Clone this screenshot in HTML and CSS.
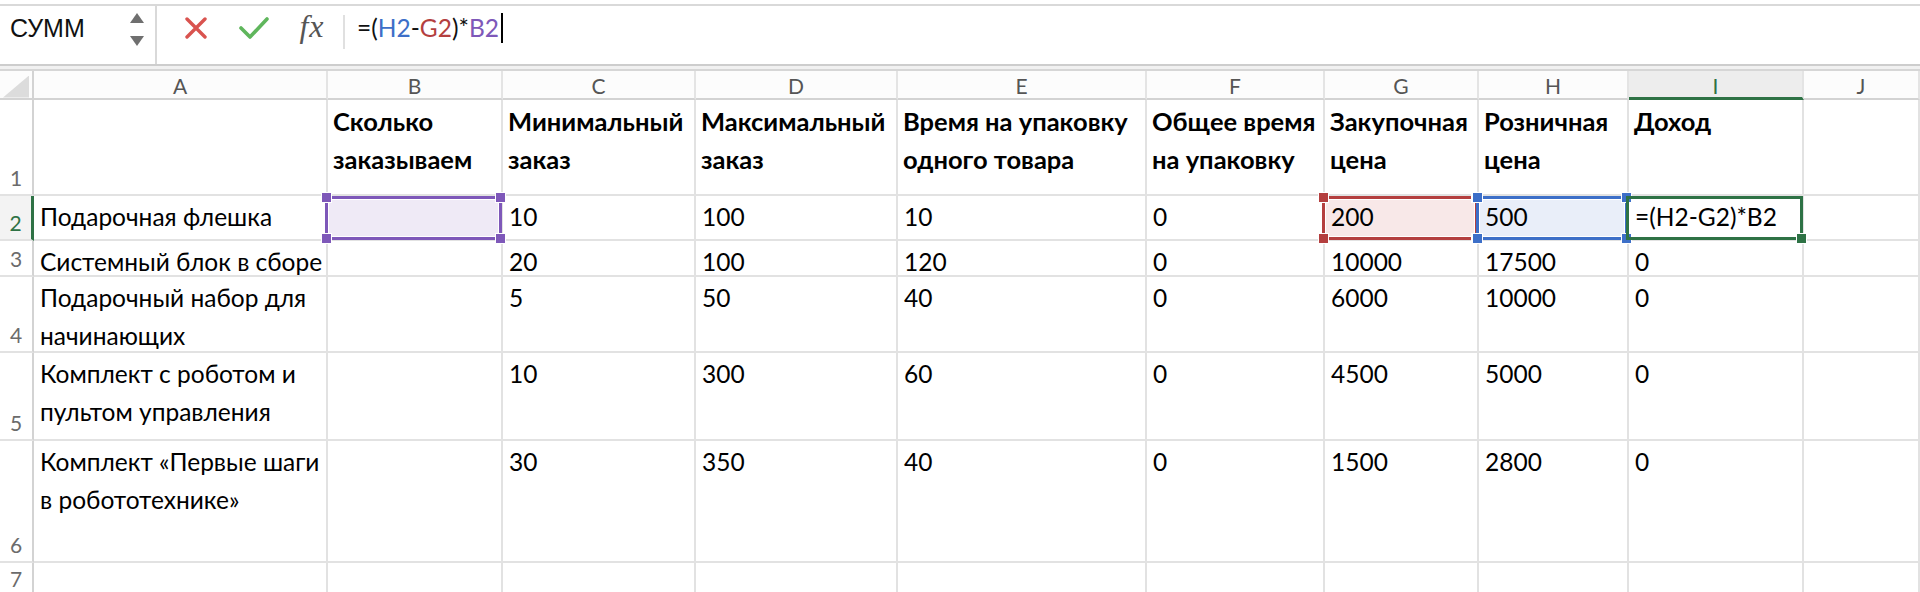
FILE: index.html
```html
<!DOCTYPE html>
<html lang="ru">
<head>
<meta charset="utf-8">
<title>Excel</title>
<link rel="stylesheet" href="styles.css">
</head>
<body>
<div class="fbar">
  <div class="namebox">
    <span class="name">СУММ</span>
    <div class="spin">
      <svg width="14" height="10" viewBox="0 0 14 10"><path d="M7 0 L14 10 L0 10 Z" fill="#6f6f6f"/></svg>
      <svg width="14" height="10" viewBox="0 0 14 10"><path d="M0 0 L14 0 L7 10 Z" fill="#6f6f6f"/></svg>
    </div>
  </div>
  <div class="fbtn first">
    <svg width="22" height="22" viewBox="0 0 22 22"><path d="M2 2 L20 20 M20 2 L2 20" stroke="#d9534f" stroke-width="3.4" stroke-linecap="round"/></svg>
  </div>
  <div class="fbtn">
    <svg width="30" height="24" viewBox="0 0 30 24"><path d="M2 12 L11 21 L28 3" stroke="#5fb65c" stroke-width="3.6" fill="none" stroke-linecap="round" stroke-linejoin="round"/></svg>
  </div>
  <div class="fbtn fx">fx</div>
  <div class="fsep"></div>
  <div class="formula">=(<span class="c-blue">H2</span>-<span class="c-red">G2</span>)*<span class="c-purple">B2</span><span class="caret"></span></div>
</div>
<div class="gap"></div>
<div class="sheet">
  <!-- header row -->
  <div class="ch corner"><div class="tri"></div></div>
  <div class="ch">A</div><div class="ch">B</div><div class="ch">C</div><div class="ch">D</div><div class="ch">E</div>
  <div class="ch">F</div><div class="ch">G</div><div class="ch">H</div><div class="ch act">I</div><div class="ch">J</div>

  <!-- row 1 -->
  <div class="rh">1</div>
  <div class="c"></div>
  <div class="c b">Сколько<br>заказываем</div>
  <div class="c b">Минимальный<br>заказ</div>
  <div class="c b">Максимальный<br>заказ</div>
  <div class="c b">Время на упаковку<br>одного товара</div>
  <div class="c b">Общее время<br>на упаковку</div>
  <div class="c b">Закупочная<br>цена</div>
  <div class="c b">Розничная<br>цена</div>
  <div class="c b">Доход</div>
  <div class="c"></div>

  <!-- row 2 -->
  <div class="rh act">2</div>
  <div class="c">Подарочная флешка</div>
  <div class="c sc"><div class="sel purple"><i class="h tl"></i><i class="h tr"></i><i class="h bl"></i><i class="h br"></i></div></div>
  <div class="c">10</div>
  <div class="c">100</div>
  <div class="c">10</div>
  <div class="c">0</div>
  <div class="c sc"><span class="t">200</span><div class="sel red"><i class="h tl"></i><i class="h tr"></i><i class="h bl"></i><i class="h br"></i></div></div>
  <div class="c sc"><span class="t">500</span><div class="sel blue"><i class="h tl"></i><i class="h tr"></i><i class="h bl"></i><i class="h br"></i></div></div>
  <div class="c sc"><span class="t">=(H2-G2)*B2</span><div class="sel green"><i class="h br"></i></div></div>
  <div class="c"></div>

  <!-- row 3 -->
  <div class="rh">3</div>
  <div class="c">Системный блок в сборе</div>
  <div class="c"></div>
  <div class="c">20</div>
  <div class="c">100</div>
  <div class="c">120</div>
  <div class="c">0</div>
  <div class="c">10000</div>
  <div class="c">17500</div>
  <div class="c">0</div>
  <div class="c"></div>

  <!-- row 4 -->
  <div class="rh">4</div>
  <div class="c">Подарочный набор для<br>начинающих</div>
  <div class="c"></div>
  <div class="c">5</div>
  <div class="c">50</div>
  <div class="c">40</div>
  <div class="c">0</div>
  <div class="c">6000</div>
  <div class="c">10000</div>
  <div class="c">0</div>
  <div class="c"></div>

  <!-- row 5 -->
  <div class="rh">5</div>
  <div class="c">Комплект с роботом и<br>пультом управления</div>
  <div class="c"></div>
  <div class="c">10</div>
  <div class="c">300</div>
  <div class="c">60</div>
  <div class="c">0</div>
  <div class="c">4500</div>
  <div class="c">5000</div>
  <div class="c">0</div>
  <div class="c"></div>

  <!-- row 6 -->
  <div class="rh">6</div>
  <div class="c">Комплект «Первые шаги<br>в робототехнике»</div>
  <div class="c"></div>
  <div class="c">30</div>
  <div class="c">350</div>
  <div class="c">40</div>
  <div class="c">0</div>
  <div class="c">1500</div>
  <div class="c">2800</div>
  <div class="c">0</div>
  <div class="c"></div>

  <!-- row 7 -->
  <div class="rh r7">7</div>
  <div class="c"></div><div class="c"></div><div class="c"></div><div class="c"></div><div class="c"></div>
  <div class="c"></div><div class="c"></div><div class="c"></div><div class="c"></div><div class="c"></div>
</div>
</body>
</html>
```
FILE: styles.css
```css
* { box-sizing: border-box; }

html, body {
  margin: 0;
  padding: 0;
  background: #ffffff;
  width: 1920px;
  height: 592px;
  overflow: hidden;
  font-family: Lato, "Open Sans", sans-serif;
  color: #000;
}

/* ---------- formula bar ---------- */
.fbar {
  margin-top: 4px;
  height: 62px;
  border-top: 2px solid #d9d9d9;
  border-bottom: 2px solid #cdcdcd;
  display: flex;
  align-items: flex-start;
  background: #fff;
}

.namebox {
  width: 157px;
  height: 100%;
  border-right: 2px solid #d9d9d9;
  display: flex;
  justify-content: space-between;
  padding: 0 11px 0 10px;
}

.name {
  font-family: "Liberation Sans", Arial, sans-serif;
  font-size: 25px;
  line-height: 44px;
  color: #111;
}

.spin {
  display: flex;
  flex-direction: column;
  justify-content: space-between;
  padding-top: 7px;
  height: 40px;
}

.spin svg { display: block; }

.fbtn {
  width: 58px;
  height: 44px;
  display: flex;
  align-items: center;
  justify-content: center;
}

.fbtn.first { margin-left: 10px; }

.fx {
  font-family: "Liberation Serif", "DejaVu Serif", serif;
  font-style: italic;
  font-size: 32px;
  color: #555;
  letter-spacing: 1px;
  padding-bottom: 3px;
}

.fsep {
  width: 2px;
  height: 34px;
  margin-top: 9px;
  margin-left: 2px;
  background: #e0e0e0;
}

.formula {
  padding-left: 12px;
  font-size: 24.5px;
  line-height: 44px;
  color: #111;
  display: flex;
  align-items: center;
}

.c-blue { color: #3d6fc8; }
.c-red { color: #b43f3f; }
.c-purple { color: #7e58b9; }

.caret {
  display: inline-block;
  width: 2px;
  height: 30px;
  margin-left: 2px;
  background: #000;
}

.gap {
  background: #f1f1f1;
  border-bottom: 2px solid #d6d6d6;
  height: 5px;
}

/* ---------- sheet ---------- */
.sheet {
  display: grid;
  grid-template-columns: 34px 294px 175px 193px 202px 249px 178px 154px 150px 175px 1fr;
  grid-template-rows: 29px 96px 45px 36px 76px 88px 122px 40px;
}

.ch {
  background: #fcfcfc;
  border-right: 2px solid #e4e4e4;
  border-bottom: 2px solid #d3d3d3;
  display: flex;
  align-items: center;
  justify-content: center;
  font-size: 21px;
  color: #555;
  padding-top: 2px;
}

.ch.act {
  background: #ededed;
  color: #2e7245;
  border-bottom: 3px solid #2e7245;
}

.corner {
  border-right: 2px solid #d3d3d3;
}

.tri {
  width: 26px;
  height: 22px;
  background: #dcdcdc;
  clip-path: polygon(100% 0, 100% 100%, 0 100%);
  margin-top: 2px;
}

.rh {
  border-right: 2px solid #d3d3d3;
  border-bottom: 2px solid #e2e2e2;
  display: flex;
  align-items: flex-end;
  justify-content: center;
  font-size: 21px;
  line-height: 24px;
  color: #6b6b6b;
  padding-bottom: 4px;
  background: #fff;
}

.rh.r7 {
  align-items: flex-start;
  padding: 4px 0 0;
}

.rh.act {
  color: #2e7245;
  border-right: 3px solid #2e7245;
  background: #f3f3f3;
}

.c {
  border-right: 2px solid #e2e2e2;
  border-bottom: 2px solid #e2e2e2;
  padding: 2px 4px 0 6px;
  font-size: 24.5px;
  line-height: 38px;
  white-space: nowrap;
  overflow: hidden;
}

.c.b {
  font-weight: 700;
  font-size: 25.5px;
  padding-left: 5px;
}

.c.sc {
  position: relative;
  overflow: visible;
}

.t {
  position: relative;
  z-index: 2;
}

.sel {
  position: absolute;
  left: -3px;
  top: 0px;
  right: -1px;
  bottom: -1px;
  border: 3px solid;
  z-index: 1;
  box-shadow: inset 0 0 0 1px #fff;
}

.sel.purple { border-color: #7e58b9; background: #efeaf6; }
.sel.red { border-color: #b43f3f; background: #f8e8e8; }
.sel.blue { border-color: #3d6fc8; background: #e9eef9; }
.sel.green { border-color: #2e7245; background: transparent; box-shadow: none; }

.h {
  position: absolute;
  width: 11px;
  height: 11px;
  z-index: 3;
  border: 1px solid #fff;
}

.purple .h { background: #7e58b9; }
.red .h { background: #b43f3f; }
.blue .h { background: #3d6fc8; }
.green .h { background: #2e7245; }

.h.tl { left: -7px; top: -7px; }
.h.tr { right: -7px; top: -7px; }
.h.bl { left: -7px; bottom: -7px; }
.h.br { right: -7px; bottom: -7px; }
```
